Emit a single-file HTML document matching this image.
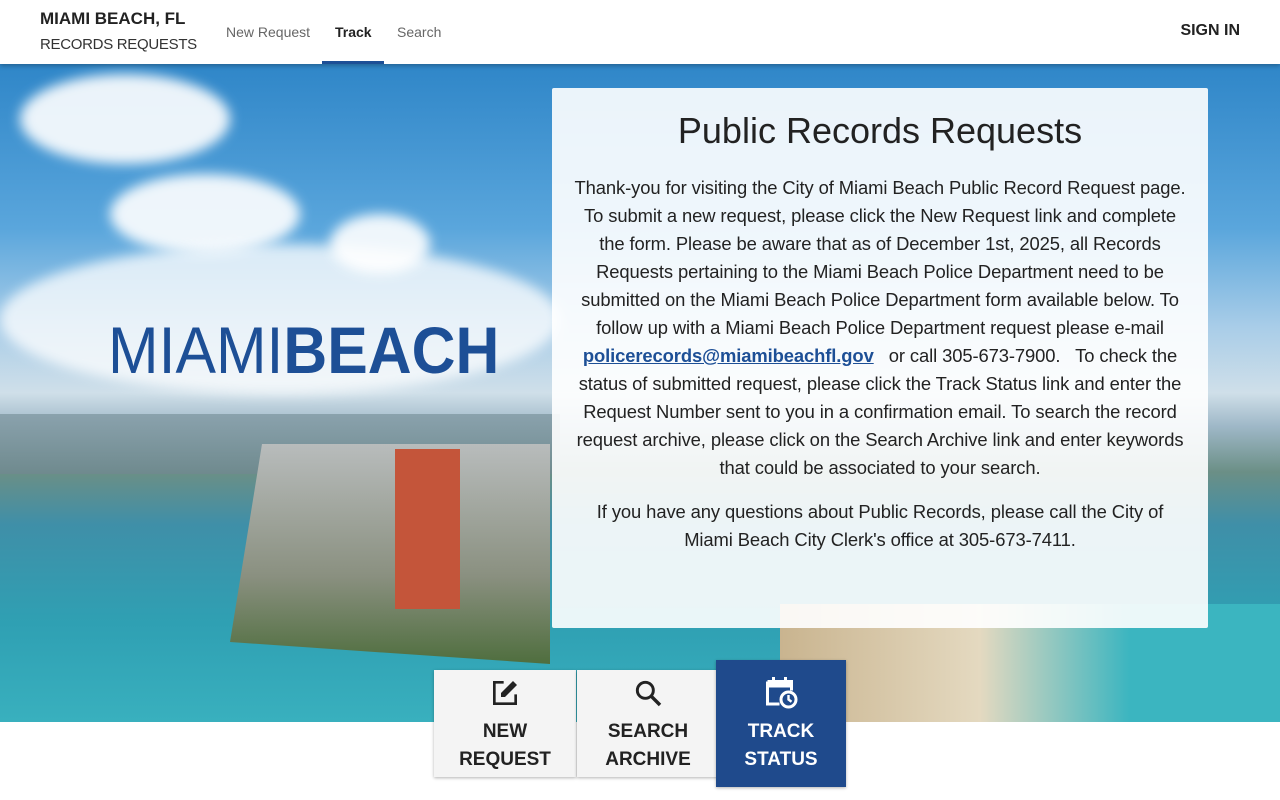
<!DOCTYPE html>
<html><head><meta charset="utf-8"><style>
*{margin:0;padding:0;box-sizing:border-box}
body{width:1280px;height:800px;overflow:hidden;font-family:"Liberation Sans",sans-serif;background:#fff;position:relative}
.hdr{position:absolute;top:0;left:0;width:1280px;height:64px;background:#fff;box-shadow:0 2px 4px rgba(0,0,0,.25);z-index:5}
.t1{position:absolute;left:40px;top:9px;font-size:17px;font-weight:bold;color:#222}
.t2{position:absolute;left:40px;top:36px;font-size:15px;color:#333;letter-spacing:-.3px}
.nav{position:absolute;top:24px;font-size:14px;color:#666}
.sign{position:absolute;right:40px;top:22px;font-size:16px;font-weight:bold;color:#222}
.hero{position:absolute;top:64px;left:0;width:1280px;height:658px;overflow:hidden;
background:linear-gradient(180deg,#2f86c8 0%,#5aa6dc 25%,#a9cde8 40%,#cfdfe9 50%,#9fb8c8 55%,#6b8f86 62%,#3f8fa8 70%,#2fa0b3 85%,#39b0be 100%)}
.cl{position:absolute;background:#fff;border-radius:50%;filter:blur(6px);opacity:.9}
.logo{position:absolute;left:108px;top:253px;font-size:66px;color:#1d4f96;line-height:1;transform:scaleX(.92);transform-origin:0 0;white-space:nowrap}
.card{position:absolute;left:552px;top:88px;width:656px;height:540px;background:rgba(255,255,255,.9);border-radius:2px;text-align:center;color:#222;z-index:2}
.card h1{font-weight:normal;font-size:36px;margin-top:22px;color:#222}
.card p{font-size:18.4px;line-height:28px;padding:0;white-space:nowrap;letter-spacing:-.1px}
.card a{color:#1d4f96;font-weight:bold;text-decoration:underline}
.btn{position:absolute;top:670px;width:142px;height:107px;background:#f4f4f4;text-align:center;font-weight:bold;font-size:19px;line-height:28px;color:#222;box-shadow:0 1px 3px rgba(0,0,0,.3);z-index:3}
.btn svg{display:block;margin:6px auto 6px}
</style></head><body>
<div class="hdr">
<div class="t1">MIAMI BEACH, FL</div><div class="t2">RECORDS REQUESTS</div>
<div class="nav" style="left:226px">New Request</div>
<div class="nav" style="left:335px;color:#222;font-weight:bold">Track</div>
<div class="nav" style="left:397px">Search</div>
<div style="position:absolute;left:322px;top:61px;width:62px;height:3px;background:#1d4f96"></div>
<div class="sign">SIGN IN</div>
</div>
<div class="hero">
<div class="cl" style="left:20px;top:10px;width:210px;height:90px"></div>
<div class="cl" style="left:110px;top:110px;width:190px;height:80px"></div>
<div class="cl" style="left:0;top:180px;width:560px;height:150px;opacity:.75"></div>
<div class="cl" style="left:330px;top:150px;width:100px;height:60px"></div>
<div style="position:absolute;left:0;top:350px;width:560px;height:60px;background:linear-gradient(180deg,#8aa2ad,#6f8a8e)"></div>
<div style="position:absolute;left:230px;top:380px;width:320px;height:220px;background:linear-gradient(180deg,#b8bcbc,#8a9080 60%,#4f6e3e);clip-path:polygon(10% 0,100% 0,100% 100%,0 90%)"></div>
<div style="position:absolute;left:395px;top:385px;width:65px;height:160px;background:#c4553a"></div>
<div style="position:absolute;left:780px;top:540px;width:500px;height:120px;background:linear-gradient(90deg,#c9b48f,#e4d9c0 40%,#3bb5c0 70%)"></div>
<div class="logo">MIAMI<b style="font-weight:bold">BEACH</b></div>
</div>
<div class="card">
<h1>Public Records Requests</h1>
<p style="margin-top:22px">Thank-you for visiting the City of Miami Beach Public Record Request page.<br>To submit a new request, please click the New Request link and complete<br>the form. Please be aware that as of December 1st, 2025, all Records<br>Requests pertaining to the Miami Beach Police Department need to be<br>submitted on the Miami Beach Police Department form available below. To<br>follow up with a Miami Beach Police Department request please e-mail<br><a>policerecords@miamibeachfl.gov</a>&nbsp;&nbsp; or call 305-673-7900.&nbsp;&nbsp; To check the<br>status of submitted request, please click the Track Status link and enter the<br>Request Number sent to you in a confirmation email. To search the record<br>request archive, please click on the Search Archive link and enter keywords<br>that could be associated to your search.</p>
<p style="margin-top:16px">If you have any questions about Public Records, please call the City of<br>Miami Beach City Clerk's office at 305-673-7411.</p>
</div>
<div class="btn" style="left:434px"><svg width="32" height="32" viewBox="0 0 24 24" style="margin-top:7px;margin-bottom:9px"><path d="M11 4H4v16h16v-7" fill="none" stroke="#222" stroke-width="2"/><path d="M18 3l3 3-9 9H9v-3z" fill="#222"/></svg>NEW<br>REQUEST</div>
<div class="btn" style="left:577px"><svg width="32" height="32" viewBox="0 0 24 24" style="margin-top:7px;margin-bottom:9px"><circle cx="10" cy="10" r="6" fill="none" stroke="#222" stroke-width="2.2"/><path d="M14.5 14.5L21 21" stroke="#222" stroke-width="2.6"/></svg>SEARCH<br>ARCHIVE</div>
<div class="btn" style="left:716px;top:660px;width:130px;height:127px;background:#1f4a8c;color:#fff"><svg width="36" height="36" viewBox="0 0 24 24" style="margin-top:14px;margin-bottom:8px"><path d="M3 5h16v6" fill="none" stroke="#fff" stroke-width="2"/><path d="M3 5v15h8" fill="none" stroke="#fff" stroke-width="2"/><rect x="3" y="5" width="16" height="4" fill="#fff"/><path d="M7 2v4M15 2v4" stroke="#fff" stroke-width="2"/><circle cx="17" cy="17" r="5" fill="none" stroke="#fff" stroke-width="2"/><path d="M17 14v3l2 1.5" stroke="#fff" stroke-width="1.6" fill="none"/></svg>TRACK<br>STATUS</div>
</body></html>
